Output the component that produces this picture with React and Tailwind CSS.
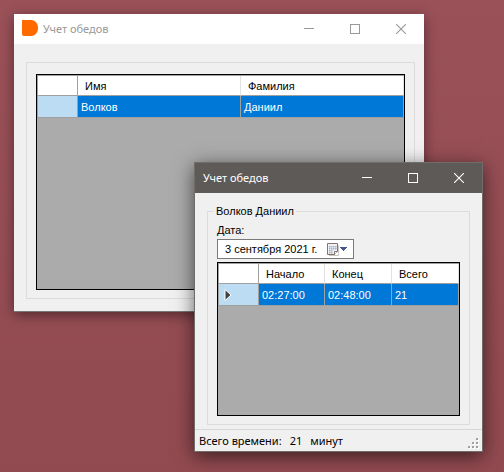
import React, { useState } from "react";

const UI = "font-['Noto_Sans','Open_Sans',sans-serif]";
const GRID = "font-['Liberation_Sans',Roboto,sans-serif]";

function CaptionButtons({ color }) {
  const button = "flex h-[30px] w-[46px] items-center justify-center";
  return (
    <div className={`ml-auto flex shrink-0 ${color}`}>
      <button type="button" aria-label="Свернуть" className={button}>
        <svg width="10" height="10" viewBox="0 0 10 10" stroke="currentColor">
          <path d="M0 4.5H10" />
        </svg>
      </button>
      <button type="button" aria-label="Развернуть" className={button}>
        <svg width="10" height="10" viewBox="0 0 10 10" fill="none" stroke="currentColor">
          <rect x="0.5" y="0.5" width="9" height="9" />
        </svg>
      </button>
      <button type="button" aria-label="Закрыть" className={button}>
        <svg width="10" height="10" viewBox="0 0 10 10" fill="none" stroke="currentColor">
          <path d="M0 0L10 10M10 0L0 10" strokeWidth="1.1" />
        </svg>
      </button>
    </div>
  );
}

function DataGrid({ columns, rows, widths, height, current }) {
  return (
    <div className={`border border-black bg-[#ababab] ${height}`}>
      <table className={`w-full table-fixed border-separate border-spacing-0 border-l border-t border-[#a0a0a0] text-[11px] ${GRID}`}>
        <colgroup>
          <col className="w-[40px]" />
          {widths.map((w, i) => (
            <col key={i} className={w} />
          ))}
        </colgroup>
        <thead>
          <tr className="h-5 bg-white text-left text-black">
            <td className="border-b border-r border-[#a0a0a0] p-0" />
            {columns.map((c) => (
              <th
                key={c}
                scope="col"
                className="border-b border-r border-b-[#a0a0a0] border-r-[#e2e2e2] py-0 pl-[7px] pr-0 leading-4 font-normal"
              >
                {c}
              </th>
            ))}
          </tr>
        </thead>
        <tbody>
          {rows.map((row, r) => (
            <tr key={r} className="h-[22px] bg-[#0078d7] text-white">
              <td className="border-b border-r border-[#a0a0a0] bg-[#bcdcf4] p-0">
                {current && (
                  <svg className="ml-[5px]" width="8" height="12" viewBox="0 0 8 12">
                    <path d="M1 0.5L7 6L1 11.5Z" fill="#404040" stroke="#fff" strokeWidth="1" />
                  </svg>
                )}
              </td>
              {row.map((v, i) => (
                <td key={i} className="border-b border-r border-[#a0a0a0] py-0 pl-[3px] pr-0 leading-4">
                  {v}
                </td>
              ))}
            </tr>
          ))}
        </tbody>
      </table>
    </div>
  );
}

function SizeGrip() {
  const dots = [[8, 0], [4, 4], [8, 4], [0, 8], [4, 8], [8, 8]];
  return (
    <svg width="11" height="11" viewBox="0 0 11 11" className="ml-auto self-end mb-[2px]">
      {dots.map(([x, y]) => (
        <g key={`${x}-${y}`}>
          <rect x={x + 1} y={y + 1} width="2" height="2" fill="#fff" />
          <rect x={x} y={y} width="2" height="2" fill="#a0a0a0" />
        </g>
      ))}
    </svg>
  );
}

function PeopleWindow() {
  return (
    <section className="absolute left-[14px] top-[14px] w-[410px] border-b border-[#777] bg-[#f0f0f0] shadow-[0_3px_12px_rgba(0,0,0,0.45)]">
      <header className="flex h-[30px] items-center bg-white">
        <svg width="16" height="16" viewBox="0 0 16 16" className="mb-[2px] ml-2 shrink-0">
          <path d="M0 0H9C13 0 16 3.5 16 8S13 16 9 16H2Q0 16 0 14Z" fill="#ff6a00" />
        </svg>
        <h1 className={`ml-[5px] text-[11px] leading-4 text-[#999] ${UI}`}>Учет обедов</h1>
        <CaptionButtons color="text-[#999]" />
      </header>
      <div className="pb-3 pl-3 pr-[9px] pt-[18px]">
        <div className="border border-[#dcdcdc] px-[9px] pb-2 pt-[11px]">
          <DataGrid
            columns={["Имя", "Фамилия"]}
            rows={[["Волков", "Даниил"]]}
            widths={["w-[163px]", "w-[163px]"]}
            height="h-[216px]"
          />
        </div>
      </div>
    </section>
  );
}

function DatePicker() {
  const [date, setDate] = useState("3 сентября 2021 г.");
  return (
    <div className="flex h-5 w-[137px] items-center border border-[#7a7a7a] bg-white">
      <input
        id="date"
        type="text"
        value={date}
        onChange={(e) => setDate(e.target.value)}
        className={`h-4 w-[108px] pl-[7px] text-[11px] leading-4 text-black outline-none ${GRID}`}
      />
      <button type="button" aria-label="Открыть календарь" className="flex items-center">
        <svg width="24" height="14" viewBox="0 0 24 14">
          <path d="M3 13.5H12.5V3" fill="none" stroke="#c9c5c2" />
          <path d="M1.5 1.5H11.5V9.5L8.5 12.5H1.5Z" fill="#f0f1f6" stroke="#85736f" />
          <path d="M11.5 9.5H8.5V12.5" fill="#fff" stroke="#85736f" />
          <path d="M3 4h1.5v1.5H3zM5 4h1.5v1.5H5zM7 4h1.5v1.5H7zM9 4h1.5v1.5H9zM3 6h1.5v1.5H3zM5 6h1.5v1.5H5zM7 6h1.5v1.5H7zM9 6h1.5v1.5H9zM3 8h1.5v1.5H3zM5 8h1.5v1.5H5zM3 10h1.5v1.5H3zM5 10h1.5v1.5H5z" fill="#aab3ca" />
          <path d="M14 5H21V6H20V7H19V8H18V9H17V8H16V7H15V6H14Z" fill="#44598a" />
        </svg>
      </button>
    </div>
  );
}

function TimeWindow() {
  return (
    <section className="absolute left-[194px] top-[162px] w-[289px] border border-[#706d6b] bg-[#f0f0f0] shadow-[0_4px_18px_rgba(0,0,0,0.6)]">
      <header className="flex h-[30px] items-center bg-[#5d5a58]">
        <h2 className={`ml-2 text-[11px] leading-4 text-white ${UI}`}>Учет обедов</h2>
        <CaptionButtons color="text-white" />
      </header>
      <div className="pb-1 pl-3 pr-3 pt-[10px]">
        <fieldset className="border border-[#dcdcdc] px-[9px] pb-2">
          <legend className={`-ml-[3px] px-[2px] text-[11px] leading-4 text-black ${GRID}`}>Волков Даниил</legend>
          <label htmlFor="date" className={`mb-px mt-[3px] block text-[11px] leading-4 text-black ${GRID}`}>
            Дата:
          </label>
          <DatePicker />
          <div className="pt-[3px]">
            <DataGrid
              columns={["Начало", "Конец", "Всего"]}
              rows={[["02:27:00", "02:48:00", "21"]]}
              widths={["w-[66px]", "w-[67px]", "w-[67px]"]}
              height="h-[154px]"
              current
            />
          </div>
        </fieldset>
      </div>
      <footer className={`flex h-[22px] items-center border-t border-[#d7d7d7] pl-1 pr-[3px] text-[11px] leading-4 text-black ${UI}`}>
        <span>Всего времени:</span>
        <span className="ml-2">21</span>
        <span className="ml-2">минут</span>
        <SizeGrip />
      </footer>
    </section>
  );
}

export default function App() {
  return (
    <main className="relative min-h-screen overflow-hidden bg-linear-to-b from-[#9a5158] to-[#914a50]">
      <PeopleWindow />
      <TimeWindow />
    </main>
  );
}
